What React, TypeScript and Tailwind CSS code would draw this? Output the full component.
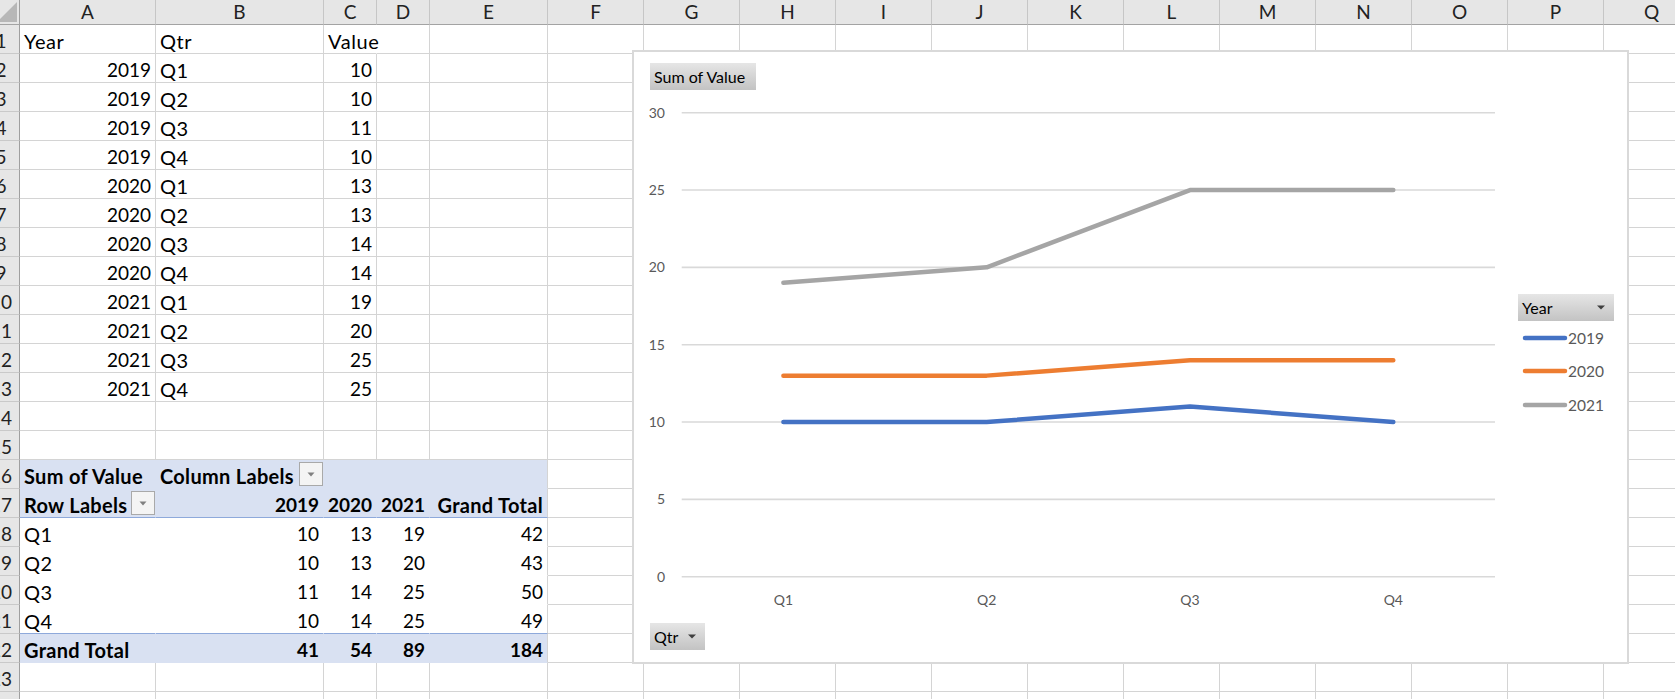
import React from 'react';

const LETTERS = ['A', 'B', 'C', 'D', 'E', 'F', 'G', 'H', 'I', 'J', 'K', 'L', 'M', 'N', 'O', 'P', 'Q'];
const W: Record<string, string> = {
  A: 'w-[136px]',
  B: 'w-[168px]',
  C: 'w-[53px]',
  D: 'w-[53px]',
  E: 'w-[118px]',
  F: 'w-[96px]',
  G: 'w-[96px]',
  H: 'w-[96px]',
  I: 'w-[96px]',
  J: 'w-[96px]',
  K: 'w-[96px]',
  L: 'w-[96px]',
  M: 'w-[96px]',
  N: 'w-[96px]',
  O: 'w-[96px]',
  P: 'w-[96px]',
  Q: 'w-[96px]',
};

type Cell = { t: string; right?: boolean; bold?: boolean; dd?: boolean; overflow?: boolean };

const data: [string, string, string][] = [
  ['2019', 'Q1', '10'],
  ['2019', 'Q2', '10'],
  ['2019', 'Q3', '11'],
  ['2019', 'Q4', '10'],
  ['2020', 'Q1', '13'],
  ['2020', 'Q2', '13'],
  ['2020', 'Q3', '14'],
  ['2020', 'Q4', '14'],
  ['2021', 'Q1', '19'],
  ['2021', 'Q2', '20'],
  ['2021', 'Q3', '25'],
  ['2021', 'Q4', '25'],
];

function buildRows(): Record<number, Record<string, Cell>> {
  const rows: Record<number, Record<string, Cell>> = {};
  rows[1] = { A: { t: 'Year' }, B: { t: 'Qtr' }, C: { t: 'Value', overflow: true } };
  data.forEach((d, i) => {
    rows[i + 2] = { A: { t: d[0], right: true }, B: { t: d[1] }, C: { t: d[2], right: true } };
  });
  rows[16] = { A: { t: 'Sum of Value', bold: true }, B: { t: 'Column Labels', bold: true, dd: true } };
  rows[17] = {
    A: { t: 'Row Labels', bold: true, dd: true },
    B: { t: '2019', bold: true, right: true },
    C: { t: '2020', bold: true, right: true },
    D: { t: '2021', bold: true, right: true },
    E: { t: 'Grand Total', bold: true, right: true },
  };
  const body: [string, string, string, string, string][] = [
    ['Q1', '10', '13', '19', '42'],
    ['Q2', '10', '13', '20', '43'],
    ['Q3', '11', '14', '25', '50'],
    ['Q4', '10', '14', '25', '49'],
  ];
  body.forEach((b, i) => {
    rows[18 + i] = {
      A: { t: b[0] },
      B: { t: b[1], right: true },
      C: { t: b[2], right: true },
      D: { t: b[3], right: true },
      E: { t: b[4], right: true },
    };
  });
  rows[22] = {
    A: { t: 'Grand Total', bold: true },
    B: { t: '41', bold: true, right: true },
    C: { t: '54', bold: true, right: true },
    D: { t: '89', bold: true, right: true },
    E: { t: '184', bold: true, right: true },
  };
  return rows;
}

const ROWS = buildRows();

function cellBorder(n: number, col: string): string {
  const inPivot = n >= 16 && n <= 22 && 'ABCDE'.includes(col);
  if (!inPivot) {
    if (n === 1 && col === 'C') return 'border-r border-b border-r-transparent border-b-[#d4d4d4]';
    return 'border-r border-b border-r-[#d4d4d4] border-b-[#d4d4d4]';
  }
  const shaded = n === 16 || n === 17 || n === 22;
  const bg = shaded ? 'bg-[#d9e1f2]' : 'bg-white';
  const right = col === 'E' ? 'border-r-[#d4d4d4]' : 'border-r-transparent';
  const bottom = n === 17 || n === 21 ? 'border-b-[#8ea9db]' : 'border-b-transparent';
  return `${bg} border-r border-b ${right} ${bottom}`;
}

function Dropdown() {
  return (
    <div className="self-center w-[24px] h-[24px] shrink-0 bg-[#f4f4f4] border border-[#a9a9a9] flex items-center justify-center">
      <svg width="8" height="5" viewBox="0 0 8 5">
        <path d="M0.5 0.5 L7.5 0.5 L4 4.5 Z" fill="#808080" />
      </svg>
    </div>
  );
}

function SheetCell({ n, col }: { n: number; col: string }) {
  const c = ROWS[n]?.[col];
  const wordy = c ? /[A-Za-z]/.test(c.t) : false;
  const wordCls = !wordy ? '' : c?.bold ? 'text-[20px] tracking-[0.3px]' : 'text-[20px] tracking-[0.6px]';
  return (
    <div
      className={`shrink-0 h-full relative ${W[col]} ${cellBorder(n, col)} ${
        c?.overflow ? 'overflow-visible' : 'overflow-hidden'
      }`}
    >
      {c && (
        <div
          className={`flex h-full items-end whitespace-nowrap ${
            c.dd ? 'justify-between pl-[4px] pr-0' : c.right ? 'justify-end pr-[4px]' : 'pl-[4px]'
          }`}
        >
          <span className={`leading-[22px] pb-[1px] ${c.bold ? 'font-bold' : 'font-normal'} ${wordCls}`}>
            {c.t}
          </span>
          {c.dd && <Dropdown />}
        </div>
      )}
    </div>
  );
}

function RowHeader({ n }: { n: number }) {
  return (
    <div className="w-[20px] shrink-0 h-full overflow-hidden bg-[#e6e6e6] border-r border-b border-r-[#9f9f9f] border-b-[#c9c9c9]">
      <div className="w-[40px] -ml-[19px] h-full flex items-end justify-center">
        <span className="leading-[22px] pb-[1px] text-[#222]">{n}</span>
      </div>
    </div>
  );
}

function FieldButton({ label, w, arrow }: { label: string; w: string; arrow?: boolean }) {
  return (
    <div
      className={`${w} h-[27px] flex items-center justify-between pl-[4px] pr-[9px] bg-linear-to-b from-[#e6e6e6] to-[#c3c3c3] text-[16px] text-black`}
    >
      <span className="leading-[20px] whitespace-nowrap">{label}</span>
      {arrow && (
        <svg width="8" height="5" viewBox="0 0 8 5">
          <path d="M0 0.5 L8 0.5 L4 4.5 Z" fill="#3f3f3f" />
        </svg>
      )}
    </div>
  );
}

const PX = [149.4, 352.7, 556.0, 759.3];
const yv = (v: number) => 486.7 - v * 15.467;
const SERIES: { color: string; vals: number[]; label: string }[] = [
  { color: '#4472c4', vals: [10, 10, 11, 10], label: '2019' },
  { color: '#ed7d31', vals: [13, 13, 14, 14], label: '2020' },
  { color: '#a5a5a5', vals: [19, 20, 25, 25], label: '2021' },
];

function Chart() {
  return (
    <div className="absolute left-[632px] top-[50px] z-10 w-[997px] h-[614px] border-2 border-[#d9d9d9] bg-white flex">
      <div className="w-[884px] shrink-0 flex flex-col pt-[11px]">
        <div className="pl-[16px]">
          <FieldButton label="Sum of Value" w="w-[106px]" />
        </div>
        <svg width="880" height="525" viewBox="0 0 880 525" className="block">
          {[0, 5, 10, 15, 20, 25, 30].map((v) => (
            <g key={v}>
              <line x1="47.7" x2="861" y1={yv(v)} y2={yv(v)} stroke="#d9d9d9" strokeWidth="1.6" />
              <text x="31" y={yv(v) + 5} textAnchor="end" fontSize="14" fill="#595959">
                {v}
              </text>
            </g>
          ))}
          {['Q1', 'Q2', 'Q3', 'Q4'].map((q, i) => (
            <text key={q} x={PX[i]} y="515" textAnchor="middle" fontSize="14" fill="#595959">
              {q}
            </text>
          ))}
          {SERIES.map((s) => (
            <polyline
              key={s.label}
              points={s.vals.map((v, i) => `${PX[i]},${yv(v)}`).join(' ')}
              fill="none"
              stroke={s.color}
              strokeWidth="4.5"
              strokeLinecap="round"
              strokeLinejoin="round"
            />
          ))}
        </svg>
        <div className="pl-[16px] mt-[8px]">
          <FieldButton label="Qtr" w="w-[55px]" arrow />
        </div>
      </div>
      <div className="flex flex-col pt-[242px]">
        <FieldButton label="Year" w="w-[96px]" arrow />
        {SERIES.map((s) => (
          <div key={s.label} className="h-[33.5px] flex items-center">
            <svg width="50" height="6" viewBox="0 0 50 6" className="block shrink-0">
              <line x1="7" x2="47" y1="3" y2="3" stroke={s.color} strokeWidth="4.5" strokeLinecap="round" />
            </svg>
            <span className="text-[15.5px] leading-[20px] text-[#595959]">{s.label}</span>
          </div>
        ))}
      </div>
    </div>
  );
}

export default function App() {
  const rowNums = Array.from({ length: 24 }, (_, i) => i + 1);
  return (
    <div className="relative w-[1675px] h-[699px] overflow-hidden bg-white text-black text-[19px] [font-family:Lato,sans-serif]">
      <div className="flex flex-col">
        <div className="flex h-[25px]">
          <div className="w-[20px] shrink-0 h-full bg-[#e6e6e6] border-r border-b border-r-[#9f9f9f] border-b-[#a3a3a3] overflow-hidden">
            <svg width="20" height="24" viewBox="0 0 20 24" className="block">
              <path d="M-3 22 L17 22 L17 2 Z" fill="#b7b7b7" />
            </svg>
          </div>
          {LETTERS.map((l) => (
            <div
              key={l}
              className={`${W[l]} shrink-0 h-full bg-[#e6e6e6] border-r border-b border-r-[#c6c6c6] border-b-[#a3a3a3] flex justify-center`}
            >
              <span className="leading-[24px] text-[#222]">{l}</span>
            </div>
          ))}
        </div>
        {rowNums.map((n) => (
          <div key={n} className="flex h-[29px]">
            <RowHeader n={n} />
            {LETTERS.map((l) => (
              <SheetCell key={l} n={n} col={l} />
            ))}
          </div>
        ))}
      </div>
      <Chart />
    </div>
  );
}
